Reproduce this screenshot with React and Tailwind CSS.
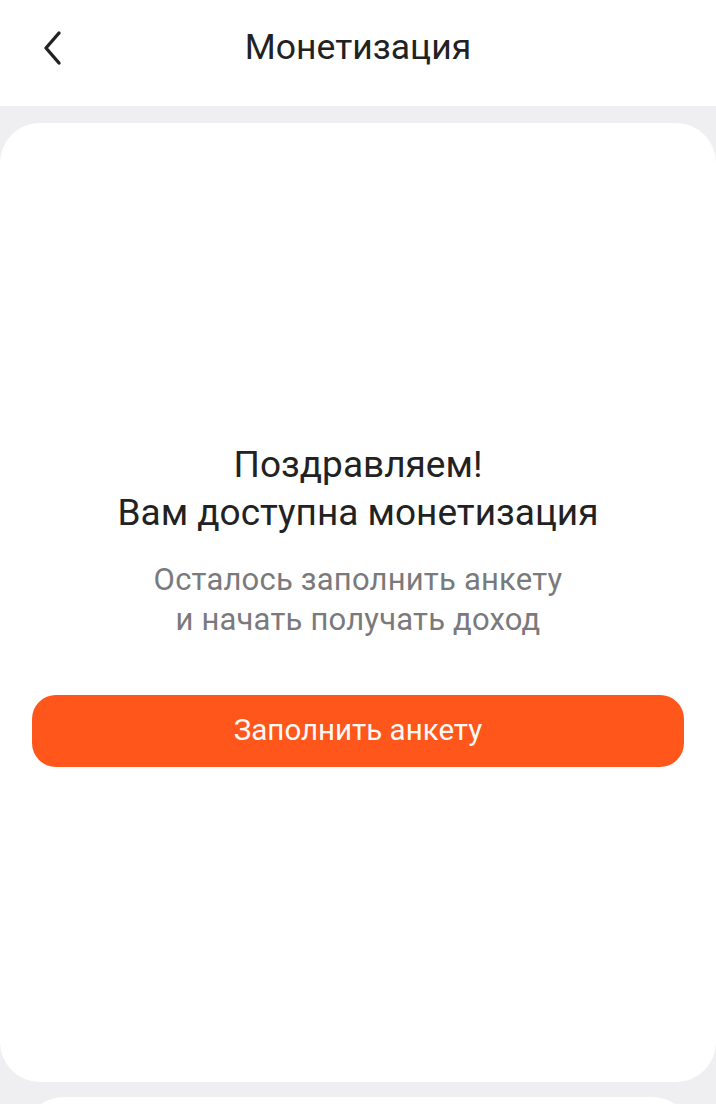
export default function App() {
  return (
    <div className="w-[716px] h-[1104px] overflow-hidden bg-[#efeff1]" style={{ fontFamily: "Roboto, 'Liberation Sans', sans-serif" }}>
      {/* Top bar */}
      <div className="relative h-[106px] bg-white flex items-center justify-center">
        <button className="absolute left-[32px] top-[26px] w-[40px] h-[44px] flex items-center justify-center text-[#222]">
          <svg width="22" height="36" viewBox="0 0 22 36" fill="none">
            <path d="M18 3 L5 18 L18 33" stroke="currentColor" strokeWidth="3.4" strokeLinecap="round" strokeLinejoin="round" />
          </svg>
        </button>
        <h1 className="text-[35.5px] leading-none text-[#222] -mt-[10px] font-normal">Монетизация</h1>
      </div>

      {/* Main card */}
      <div className="mt-[17px] h-[959px] bg-white rounded-[40px] flex flex-col items-center justify-center px-[32px]">
        <div className="text-center text-[37px] leading-[48px] text-[#222] mt-[2px]">
          <p>Поздравляем!</p>
          <p>Вам доступна монетизация</p>
        </div>
        <div className="mt-[23px] text-center text-[31px] leading-[40px] tracking-[0.2px] text-[#7a7a7c]">
          <p>Осталось заполнить анкету</p>
          <p>и начать получать доход</p>
        </div>
        <button className="mt-[55px] w-full h-[72px] rounded-[24px] bg-[#ff561c] text-[#fffaf5] text-[29.5px]">
          Заполнить анкету
        </button>
      </div>

      {/* Next card peeking */}
      <div className="mt-[15px] mx-[24px] h-[40px] bg-white rounded-t-[40px]" />
    </div>
  );
}
